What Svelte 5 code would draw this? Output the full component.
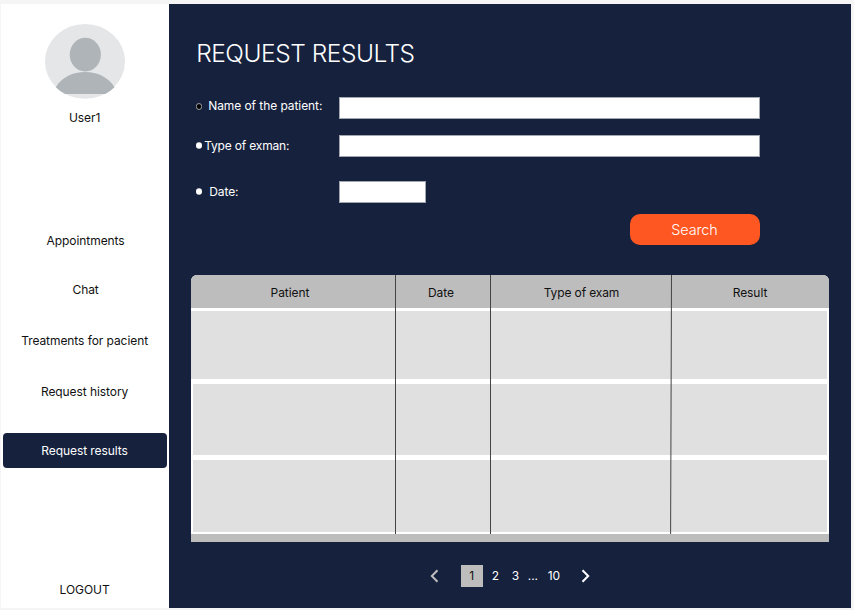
<script>
  const links = [
    { label: 'Appointments', cls: 'appointments' },
    { label: 'Chat', cls: 'chat' },
    { label: 'Treatments for pacient', cls: 'treatments' },
    { label: 'Request history', cls: 'history' },
    { label: 'Request results', cls: 'active' }
  ];
  const columns = ['Patient', 'Date', 'Type of exam', 'Result'];
  const pages = ['2', '3', '...', '10'];
</script>

<div class="app">
  <aside>
    <svg class="avatar" width="80" height="75" viewBox="0 0 80 75" aria-label="User avatar">
      <ellipse cx="40" cy="37.4" rx="40" ry="37.4" fill="#e4e6e8" />
      <ellipse cx="40.3" cy="30.6" rx="15.6" ry="16.8" fill="#aeb4b8" />
      <path d="M10.8 63.2C17 53 28 48 40.2 48S63 53 69.5 63.2Q65.5 67.2 60.3 70H20Q14.8 67.2 10.8 63.2Z" fill="#aeb4b8" />
    </svg>
    <div class="user">User1</div>
    <nav>
      {#each links as link}
        <div class="link {link.cls}">{link.label}</div>
      {/each}
    </nav>
    <div class="logout">LOGOUT</div>
  </aside>

  <main>
    <h1>REQUEST RESULTS</h1>
    <div class="field name">
      <svg class="dot" width="6" height="7" viewBox="0 0 6 7"><ellipse cx="3" cy="3.5" rx="2.7" ry="3" fill="#000" stroke="#c4c4c4" stroke-width=".8" /></svg>
      <label for="name">Name of the patient:</label><input id="name" />
    </div>
    <div class="field type">
      <svg class="dot" width="6" height="7" viewBox="0 0 6 7"><ellipse cx="3" cy="3.5" rx="3" ry="3.3" fill="#fff" /></svg>
      <label for="type">Type of exman:</label><input id="type" />
    </div>
    <div class="field date">
      <svg class="dot" width="6" height="7" viewBox="0 0 6 7"><ellipse cx="3" cy="3.5" rx="3" ry="3.3" fill="#fff" /></svg>
      <label for="date">Date:</label><input id="date" />
    </div>
    <button>Search</button>

    <section class="table">
      <div class="head">
        {#each columns as column}<span>{column}</span>{/each}
      </div>
      <div class="row first"></div>
      <div class="row second"></div>
      <div class="row third"></div>
      <div class="foot"></div>
      <svg class="rules" width="638" height="259" viewBox="0 0 638 259">
        <path d="M204.5 0V259M299.5 0V259M480.5 0L479.6 259" fill="none" stroke="#444" stroke-width="1" />
      </svg>
    </section>

    <div class="pager">
      <svg class="prev" width="9" height="14" viewBox="0 0 9 14"><path d="M7.5 1.2L1.8 7L7.5 12.8" stroke="#bdbdbd" /></svg>
      <span class="current">1</span>
      {#each pages as page, i}<span class="page p{i}">{page}</span>{/each}
      <svg class="next" width="9" height="14" viewBox="0 0 9 14"><path d="M1.5 1.2L7.2 7L1.5 12.8" stroke="#fff" /></svg>
    </div>
  </main>
</div>

<style>
  :global(body) { background: #f5f5f5; }
  .app {
    box-sizing: border-box;
    width: 854px;
    height: 610px;
    padding: 4px 3.3px 1.7px 1px;
    display: flex;
    overflow: hidden;
    background: #f5f5f5;
    font-family: Inter, sans-serif;
    font-size: 12px;
    line-height: 16px;
    letter-spacing: -0.07px;
    color: #111;
  }
  aside {
    flex: 0 0 168.2px;
    background: #fff;
    display: flex;
    flex-direction: column;
    text-align: center;
  }
  .avatar { display: block; margin: 20px 0 0 44px; flex: none; }
  .user { margin-top: 11px; padding-right: 1px; }
  nav { margin-top: 107px; }
  .appointments { padding-left: 1px; }
  .chat { margin-top: 33px; padding-left: 1px; }
  .treatments { margin-top: 35px; padding-right: 1px; }
  .history { margin-top: 35px; padding-right: 1px; }
  .active {
    margin: 32.6px 1.8px 0 1.7px;
    padding-right: 1px;
    height: 35.5px;
    line-height: 36px;
    border-radius: 4px;
    background: #16213d;
    color: #fff;
  }
  .logout { margin-top: 113.5px; padding-right: 1px; }

  main {
    flex: 1;
    background: #16213d;
    color: #fff;
    display: flex;
    flex-direction: column;
  }
  h1 {
    margin: 34px 0 0 27px;
    font-size: 24.5px;
    line-height: 30px;
    font-weight: 300;
    letter-spacing: -0.47px;
  }
  .field { display: flex; align-items: center; height: 22px; padding-left: 27px; }
  .field.name { margin-top: 29px; }
  .field.type { margin-top: 16px; }
  .field.date { margin-top: 24px; }
  .dot { flex: none; margin-bottom: 1px; }
  .name .dot { margin-bottom: 4px; }
  label { width: 137.3px; padding-left: 2px; box-sizing: border-box; white-space: nowrap; }
  .name label { padding: 0 0 4px 6px; }
  .type label { letter-spacing: -0.18px; }
  .date label { padding-left: 7px; }
  input {
    box-sizing: border-box;
    width: 421px;
    height: 22px;
    padding: 0;
    border: 1px solid #a2a6b1;
    border-radius: 0;
    background: #fff;
  }
  .date input { width: 87px; }
  button {
    width: 130px;
    height: 31px;
    margin: 10.5px 0 0 461.3px;
    padding: 0 2px 0 0;
    border: 0;
    border-radius: 10px;
    background: #ff5722;
    color: #fff;
    font: 300 14.4px/31px Inter, sans-serif;
    letter-spacing: -0.05px;
  }
  .table {
    position: relative;
    width: 638.3px;
    height: 266.5px;
    margin: 30.5px 0 0 21.8px;
    background: #fff;
    border-radius: 6px 6px 0 0;
    overflow: hidden;
  }
  .head {
    display: grid;
    grid-template-columns: 204px 95px 181px 158px;
    height: 33.3px;
    line-height: 35px;
    background: #bdbdbd;
    color: #111;
    text-align: center;
  }
  .head span:first-child { padding-right: 6px; }
  .head span:nth-child(2) { padding-right: 3px; }
  .head span:nth-child(3) { padding-left: 2px; letter-spacing: -0.12px; }
  .row { background: #e0e0e0; }
  .first { height: 68.3px; margin: 2.7px 2px 0 0; }
  .second { height: 71.5px; margin: 4.7px 2px 0; }
  .third { height: 71.5px; margin: 4.7px 2px 0; }
  .foot { height: 7.8px; margin-top: 2.3px; background: #bdbdbd; }
  .rules { position: absolute; left: 0; top: 0; }

  .pager { display: flex; align-items: center; height: 22px; margin: 23.5px 0 0 261.3px; }
  .pager svg { flex: none; }
  .pager path { fill: none; stroke-width: 2; }
  .current { width: 22px; height: 21.5px; line-height: 22px; margin-left: 21.2px; background: #bdbdbd; color: #111; text-align: center; }
  .page { text-align: center; width: 20px; }
  .p0 { margin-left: 2.7px; }
  .p2 { width: 15px; }
  .p3 { width: 27px; }
  .next { margin-left: 13.6px; }
</style>
